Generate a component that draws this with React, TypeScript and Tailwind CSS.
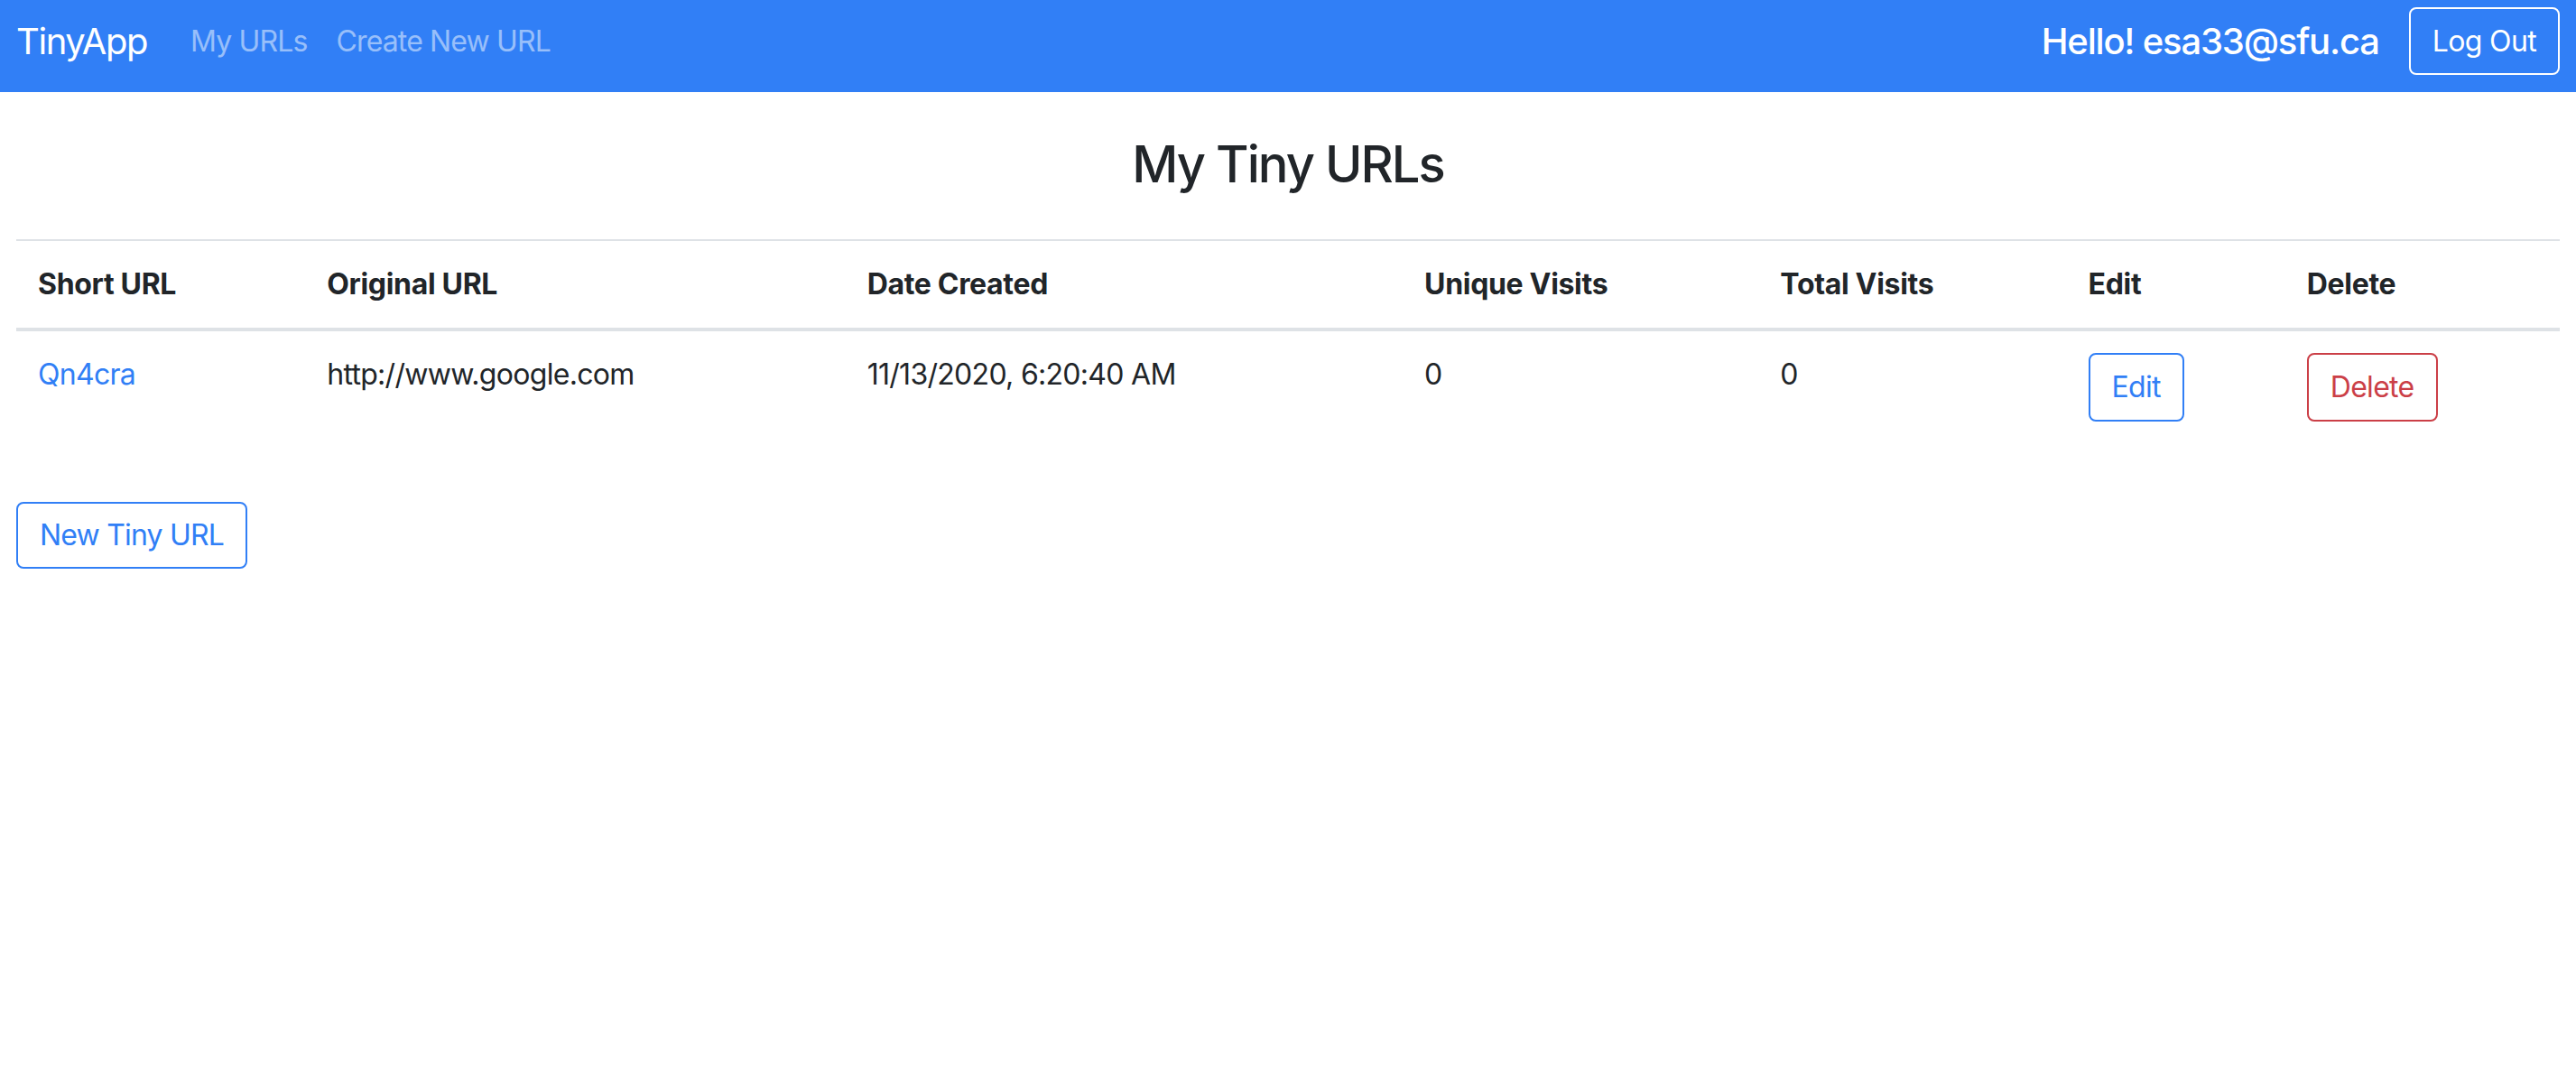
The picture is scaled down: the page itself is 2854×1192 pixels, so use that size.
const urls = [
  {
    short: "Qn4cra",
    long: "http://www.google.com",
    created: "11/13/2020, 6:20:40 AM",
    unique: 0,
    total: 0,
  },
];

const headers = [
  { label: "Short URL", w: "w-[320px]" },
  { label: "Original URL", w: "w-[598px]" },
  { label: "Date Created", w: "w-[617px]" },
  { label: "Unique Visits", w: "w-[394px]" },
  { label: "Total Visits", w: "w-[341px]" },
  { label: "Edit", w: "w-[242px]" },
  { label: "Delete", w: "w-[304px]" },
];

const Navbar = () => (
  <nav className="flex items-center justify-between bg-[#317ff6] px-[18px] pt-2 pb-[19px]">
    <div className="flex h-[75px] items-center">
      <a href="#" className="mr-8 text-[40px] leading-[60px] tracking-[-0.035em] text-white">
        TinyApp
      </a>
      <a href="#" className="px-4 text-[32px] leading-[48px] tracking-[-0.027em] text-white/50">
        My URLs
      </a>
      <a href="#" className="px-4 text-[32px] leading-[48px] tracking-[-0.027em] text-white/50">
        Create New URL
      </a>
    </div>
    <div className="flex h-[75px] items-center gap-[33px]">
      <span className="text-[40px] font-medium leading-[60px] tracking-[-0.03em] text-white">
        Hello! esa33@sfu.ca
      </span>
      <button className="h-[75px] rounded-lg border-2 border-white px-6 text-[32px] leading-[48px] tracking-[-0.02em] text-white">
        Log Out
      </button>
    </div>
  </nav>
);

export default function App() {
  return (
    <div
      className="min-h-screen bg-white text-[#212529]"
      style={{ fontFamily: "Inter, 'Noto Sans', sans-serif" }}
    >
      <Navbar />
      <main className="px-[18px]">
        <h3 className="mt-[47px] mb-[49px] text-center text-[56px] font-medium leading-[67px] tracking-[-0.035em]">
          My Tiny URLs
        </h3>

        <table className="w-full table-fixed border-collapse text-[32px] leading-[48px]">
          <thead>
            <tr className="border-t-2 border-b-4 border-[#dee2e6]">
              {headers.map((h) => (
                <th key={h.label} className={`${h.w} p-6 text-left font-bold tracking-[-0.01em]`}>
                  {h.label}
                </th>
              ))}
            </tr>
          </thead>
          <tbody className="tracking-[-0.022em]">
            {urls.map((u) => (
              <tr key={u.short}>
                <td className="p-6 align-top">
                  <a href="#" className="text-[#317ff6]">
                    {u.short}
                  </a>
                </td>
                <td className="p-6 align-top">{u.long}</td>
                <td className="p-6 align-top">{u.created}</td>
                <td className="p-6 align-top">{u.unique}</td>
                <td className="p-6 align-top">{u.total}</td>
                <td className="p-6 align-top">
                  <button className="rounded-lg border-2 border-[#317ff6] px-6 py-3 text-[#317ff6]">
                    Edit
                  </button>
                </td>
                <td className="p-6 align-top">
                  <button className="rounded-lg border-2 border-[#cb3f47] px-6 py-3 text-[#cb3f47]">
                    Delete
                  </button>
                </td>
              </tr>
            ))}
          </tbody>
        </table>

        <button className="mt-[65px] rounded-lg border-2 border-[#317ff6] px-6 py-[11px] text-[32px] leading-[48px] tracking-[-0.025em] text-[#317ff6]">
          New Tiny URL
        </button>
      </main>
    </div>
  );
}
